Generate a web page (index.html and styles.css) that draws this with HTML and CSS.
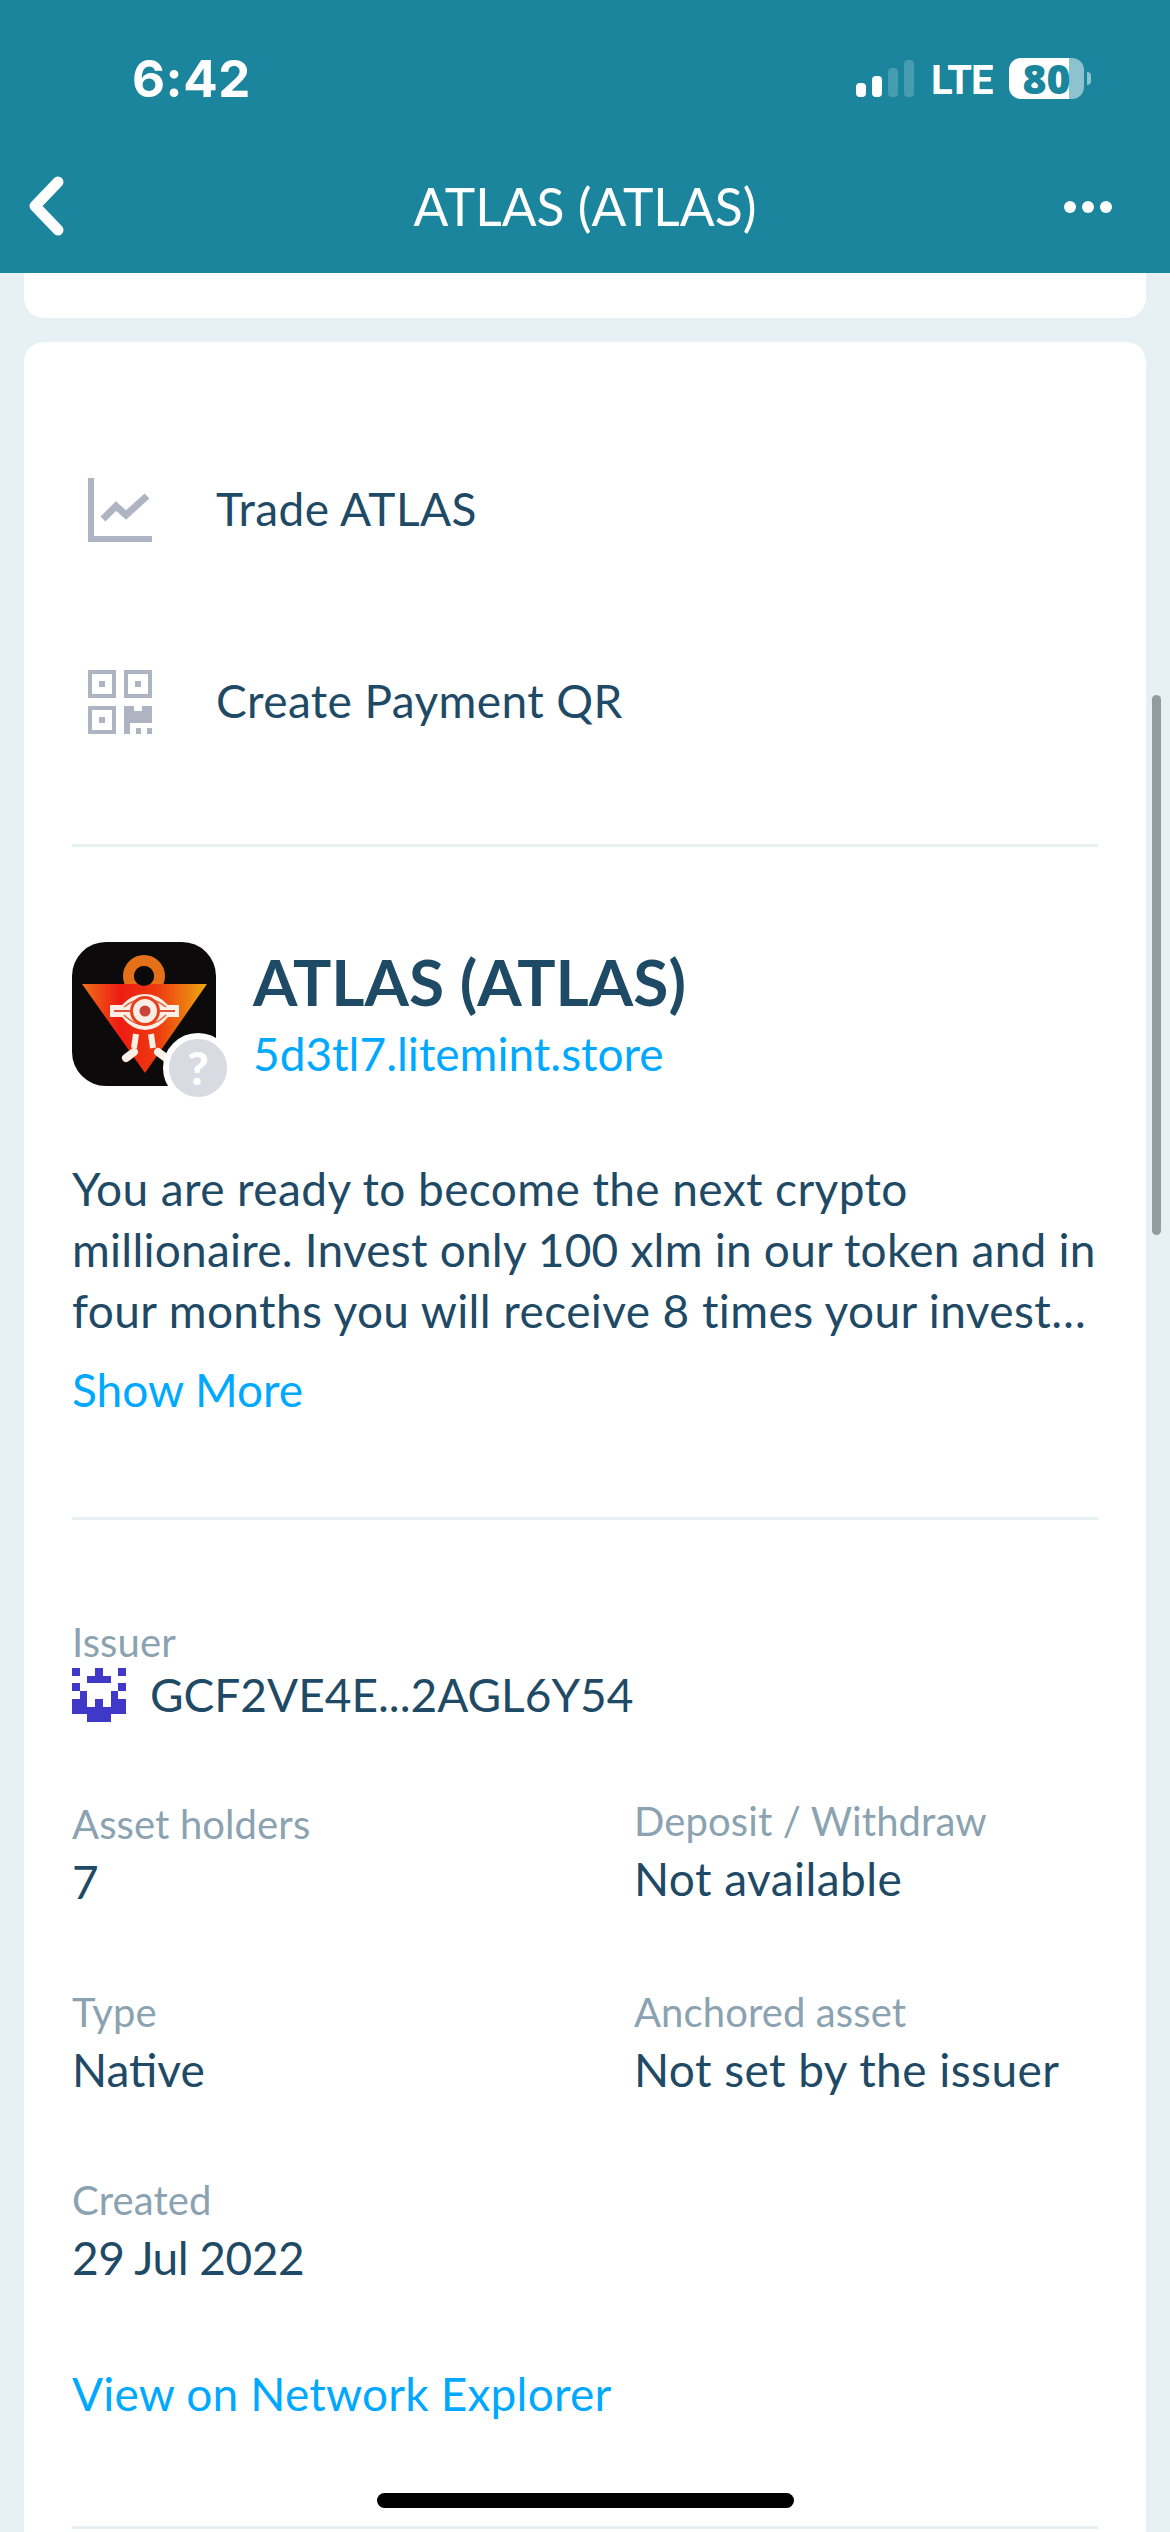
FILE: index.html
```html
<!DOCTYPE html>
<html lang="en">
<head>
  <meta charset="UTF-8" />
  <meta name="viewport" content="width=device-width, initial-scale=1.0"/>
  <title>ATLAS (ATLAS)</title>
  <link rel="stylesheet" href="styles.css">
</head>
<body>
  <div class="screen">

    <header class="header">
      <div class="status-bar">
        <span class="time">6:42</span>
        <div class="status-icons">
          <div class="signal">
            <i class="bar bar1"></i>
            <i class="bar bar2"></i>
            <i class="bar bar3 dim"></i>
            <i class="bar bar4 dim"></i>
          </div>
          <span class="lte">LTE</span>
          <div class="battery"><span>80</span></div>
          <i class="battery-cap"></i>
        </div>
      </div>
      <div class="nav-bar">
        <svg class="back" width="36" height="60" viewBox="0 0 36 60">
          <path d="M30 6 L7 30 L30 54" fill="none" stroke="#fff" stroke-width="11" stroke-linecap="round" stroke-linejoin="round"/>
        </svg>
        <h1 class="nav-title">ATLAS (ATLAS)</h1>
        <div class="dots"><i></i><i></i><i></i></div>
      </div>
    </header>

    <div class="card card-top"></div>

    <main class="card card-main">
      <!-- actions -->
      <div class="actions">
        <div class="action">
          <svg class="action-icon" width="64" height="64" viewBox="0 0 64 64">
            <path d="M3 0 V61 H64" fill="none" stroke="#aeb4c2" stroke-width="6"/>
            <path d="M15 41 L28 28 L38 37 L59 18" fill="none" stroke="#aeb4c2" stroke-width="7"/>
          </svg>
          <span>Trade ATLAS</span>
        </div>
        <div class="action">
          <svg class="action-icon" width="64" height="64" viewBox="0 0 64 64">
            <g fill="none" stroke="#aeb4c2" stroke-width="4">
              <rect x="2" y="2" width="24" height="24"/>
              <rect x="38" y="2" width="24" height="24"/>
              <rect x="2" y="38" width="24" height="24"/>
            </g>
            <g fill="#aeb4c2">
              <rect x="11" y="11" width="6" height="6"/>
              <rect x="47" y="11" width="6" height="6"/>
              <rect x="11" y="47" width="6" height="6"/>
              <path d="M36 36 H46 V41 H54 V36 H64 V53 H42 V64 H36 Z"/>
              <rect x="48" y="58" width="5" height="6"/>
              <rect x="59" y="58" width="5" height="6"/>
            </g>
          </svg>
          <span>Create Payment QR</span>
        </div>
      </div>

      <hr class="divider" />

      <!-- asset -->
      <section class="asset">
        <div class="asset-head">
          <div class="logo-wrap">
            <svg class="logo" width="144" height="144" viewBox="0 0 144 144">
              <defs>
                <linearGradient id="tri" x1="0" y1="0" x2="1" y2="0">
                  <stop offset="0" stop-color="#f0701a"/>
                  <stop offset="0.3" stop-color="#ee1c12"/>
                  <stop offset="0.6" stop-color="#ee3a10"/>
                  <stop offset="1" stop-color="#eda810"/>
                </linearGradient>
              </defs>
              <rect width="144" height="144" rx="34" fill="#0c0a0a"/>
              <circle cx="72" cy="34" r="15.500" fill="none" stroke="#e4701a" stroke-width="11"/>
              <path d="M10 42 H135 L73 131 Z" fill="url(#tri)"/>
              <circle cx="72" cy="34" r="10" fill="#0c0a0a"/>
              <!-- eye -->
              <path d="M38 63 H50 Q60 52 73 52 Q86 52 96 63 H107 V75 H96 Q86 88 73 88 Q60 88 50 75 H38 Z" fill="#fdeee6"/>
              <path d="M42 69 H58 M88 69 H103" stroke="#e0503a" stroke-width="2"/>
              <path d="M52 65 Q62 57 73 57 Q84 57 94 65 M52 73 Q62 83 73 83 Q84 83 94 73" fill="none" stroke="#e8603a" stroke-width="1.500"/>
              <circle cx="73" cy="69" r="15" fill="#e8401c"/>
              <circle cx="73" cy="69" r="12" fill="#fdeee6"/>
              <circle cx="73" cy="69" r="5.500" fill="#c8443a"/>
              <!-- legs -->
              <path d="M64 92 L62 106 M79 92 L81 106" stroke="#fdeee6" stroke-width="6"/>
              <path d="M54 116 L62 110 M86 110 L94 116" stroke="#fdeee6" stroke-width="8" stroke-linecap="round"/>
            </svg>
            <div class="logo-badge">?</div>
          </div>
          <div class="asset-name">
            <h2>ATLAS (ATLAS)</h2>
            <a class="link domain">5d3tl7.litemint.store</a>
          </div>
        </div>
        <p class="asset-desc">
          <span>You are ready to become the next crypto</span>
          <span class="line-tight">millionaire. Invest only 100 xlm in our token and in</span>
          <span>four months you will receive 8 times your invest&hellip;</span>
        </p>
        <a class="link show-more">Show More</a>
      </section>

      <hr class="divider" />

      <!-- details -->
      <section class="details">
        <div class="issuer">
          <div class="label">Issuer</div>
          <div class="issuer-row">
            <svg class="identicon" width="54" height="54" viewBox="0 0 7 7" shape-rendering="crispEdges">
              <path fill="#4038c8" d="M0 0h1v1H0z M3 0h1v1H3z M6 0h1v1H6z M2 1h3v1H2z M0 2h1v1H0z M6 2h1v1H6z M1 3h1v1H1z M5 3h1v1H5z M0 4h2v1H0z M3 4h1v1H3z M5 4h2v1H5z M0 5h7v1H0z M2 6h3v1H2z"/>
            </svg>
            <span class="value">GCF2VE4E...2AGL6Y54</span>
          </div>
        </div>
        <div class="detail-grid">
          <div class="detail detail-low"><div class="label">Asset holders</div><div class="value">7</div></div>
          <div class="detail"><div class="label">Deposit / Withdraw</div><div class="value wide">Not available</div></div>
          <div class="detail"><div class="label">Type</div><div class="value">Native</div></div>
          <div class="detail"><div class="label">Anchored asset</div><div class="value wide">Not set by the issuer</div></div>
          <div class="detail"><div class="label">Created</div><div class="value date">29 Jul 2022</div></div>
        </div>
        <a class="link explorer">View on Network Explorer</a>
      </section>

      <hr class="divider" />
    </main>

    <div class="scrollbar"></div>
    <div class="home-indicator"></div>
  </div>
</body>
</html>
```

FILE: styles.css
```css
* {
  margin: 0;
  padding: 0;
  box-sizing: border-box;
}

body {
  width: 1170px;
  height: 2532px;
  overflow: hidden;
  background: #e7f0f2;
  font-family: 'Lato', 'Open Sans', sans-serif;
  color: #1f4a66;
}

.screen {
  position: relative;
  display: flex;
  flex-direction: column;
  height: 2532px;
  overflow: hidden;
}

/* header */
.header {
  height: 273px;
  flex-shrink: 0;
  background: #1a859d;
  color: white;
}

.status-bar {
  display: flex;
  justify-content: space-between;
  align-items: center;
  height: 156px;
  padding: 0 79px 0 132px;
}

.time {
  font-family: 'Inter', sans-serif;
  font-size: 51px;
  font-weight: 700;
  letter-spacing: 0.5px;
}

.status-icons {
  display: flex;
  align-items: center;
}

.signal {
  display: flex;
  align-items: flex-end;
  gap: 6px;
  height: 37px;
  margin-right: 17px;
}

.bar {
  display: block;
  width: 10px;
  background: white;
  border-radius: 4px;
}

.bar1 { height: 14px; }
.bar2 { height: 21px; }
.bar3 { height: 29px; }
.bar4 { height: 37px; }

.dim {
  background: rgba(255, 255, 255, 0.2);
}

.lte {
  width: 60px;
  margin-right: 18px;
  padding-top: 5px;
  font-family: 'Roboto', sans-serif;
  font-size: 40px;
  font-weight: 700;
  letter-spacing: -1px;
  white-space: nowrap;
}

.battery {
  width: 75px;
  height: 41px;
  border-radius: 12px;
  background: linear-gradient(90deg, #fff 60px, rgba(255, 255, 255, 0.5) 60px);
  color: #1a859d;
  font-family: 'Open Sans', sans-serif;
  font-size: 41px;
  font-weight: 800;
  line-height: 41px;
  text-align: center;
}

.battery-cap {
  display: block;
  width: 4px;
  height: 13px;
  margin-left: 3px;
  background: rgba(255, 255, 255, 0.5);
  border-radius: 0 4px 4px 0;
}

.nav-bar {
  position: relative;
  display: flex;
  justify-content: center;
  align-items: center;
  height: 100px;
}

.back {
  position: absolute;
  left: 28px;
  top: 20px;
}

.nav-title {
  font-size: 51.600px;
  font-weight: 400;
}

.dots {
  position: absolute;
  right: 58px;
  top: 45px;
  display: flex;
  gap: 6px;
}

.dots i {
  display: block;
  width: 12px;
  height: 12px;
  background: white;
  border-radius: 50%;
}

/* cards */
.card {
  flex-shrink: 0;
  margin: 0 24px;
  background: white;
}

.card-top {
  height: 45px;
  border-radius: 0 0 20px 20px;
}

.card-main {
  flex: 1;
  margin-top: 24px;
  padding: 70px 48px 0;
  border-radius: 20px 20px 0 0;
}

.divider {
  border: none;
  height: 3px;
  background: #e7f0f2;
}

.actions {
  margin-bottom: 48px;
}

.action {
  display: flex;
  align-items: center;
  gap: 64px;
  height: 192px;
  padding-left: 16px;
  font-size: 46px;
  letter-spacing: 0.4px;
}

.action-icon {
  margin-top: 3px;
}

.asset {
  padding-top: 95px;
  height: 670px;
}

.asset-head {
  display: flex;
  gap: 37px;
}

.logo-wrap {
  position: relative;
  width: 144px;
  height: 144px;
  flex-shrink: 0;
}

.logo {
  display: block;
}

.logo-badge {
  position: absolute;
  left: 91px;
  top: 91px;
  width: 70px;
  height: 70px;
  border: 6px solid white;
  border-radius: 50%;
  background: #d9dbe2;
  color: white;
  font-size: 46px;
  font-weight: 900;
  line-height: 58px;
  text-align: center;
}

.asset-name {
  padding-top: 2px;
}

.asset-name h2 {
  font-size: 64px;
  font-weight: 700;
  line-height: 76px;
}

.link {
  color: #00a9ff;
  font-size: 46px;
}

.domain {
  display: block;
  margin-top: 6px;
  line-height: 56px;
}

.asset-desc {
  margin-top: 72px;
  font-size: 46px;
  line-height: 61px;
  letter-spacing: 0.4px;
}

.asset-desc span {
  display: block;
  white-space: nowrap;
}

.asset-desc .line-tight {
  letter-spacing: 0.22px;
}

.show-more {
  display: block;
  margin-top: 19px;
  line-height: 60px;
}

.details {
  padding-top: 94px;
  height: 1006px;
}

.label {
  color: #8ba2b1;
  font-size: 40px;
  line-height: 56px;
  letter-spacing: 0.1px;
}

.value {
  font-size: 46px;
  line-height: 60px;
}

.wide {
  letter-spacing: 0.45px;
}

.date {
  letter-spacing: -0.5px;
}

.issuer-row {
  display: flex;
  align-items: center;
  gap: 24px;
  margin-top: -5px;
}

.identicon {
  display: block;
}

.detail-grid {
  display: grid;
  grid-template-columns: 562px 1fr;
  row-gap: 72px;
  margin-top: 68px;
}

.detail-low {
  margin-top: 3px;
}

.explorer {
  display: block;
  margin-top: 76px;
  line-height: 60px;
  letter-spacing: 0.2px;
}

/* overlays */
.scrollbar {
  position: absolute;
  left: 1152px;
  top: 695px;
  width: 9px;
  height: 540px;
  border-radius: 5px;
  background: #929b9e;
}

.home-indicator {
  position: absolute;
  left: 377px;
  top: 2493px;
  width: 417px;
  height: 15px;
  border-radius: 8px;
  background: black;
}
```
